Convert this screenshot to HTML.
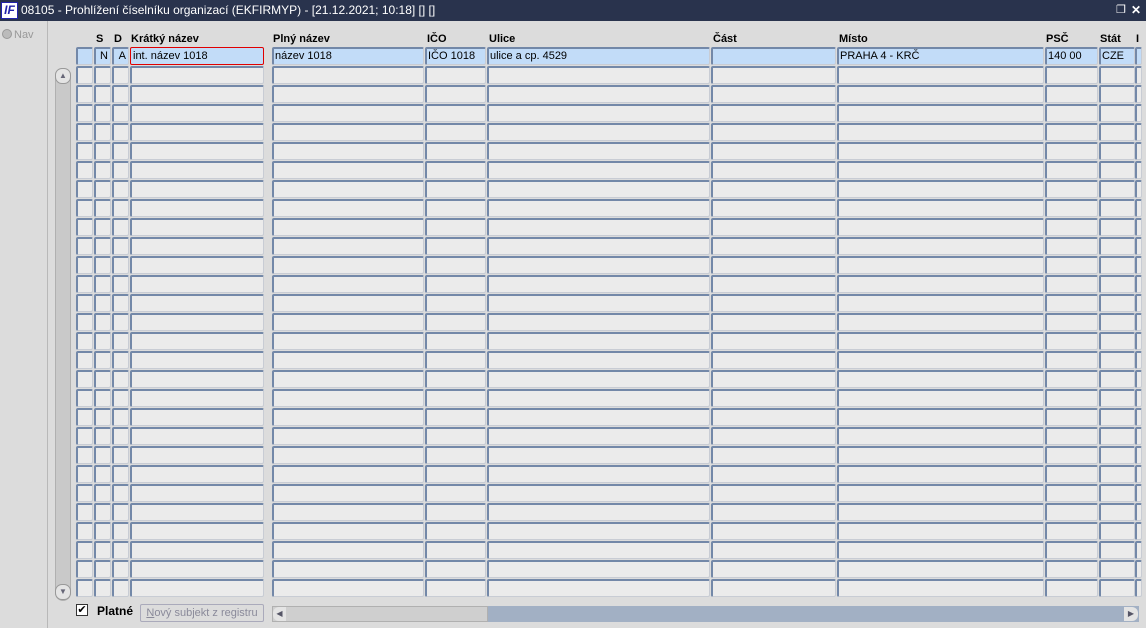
<!DOCTYPE html>
<html><head><meta charset="utf-8"><style>
*{box-sizing:border-box;margin:0;padding:0}
body{width:1146px;height:628px;background:#dcdcdc;font-family:"Liberation Sans",Arial,sans-serif;font-size:12px;position:relative;overflow:hidden}
.t{position:absolute;left:0;top:0;width:1146px;height:21px;background:#29334d;color:#fff;font-size:12px;line-height:21px}
.ic{position:absolute;left:1px;top:2px;width:17px;height:17px;background:#fff;border:1px solid #22a;color:#22a;font:italic bold 12px "Liberation Sans";line-height:15px;text-align:center}
.lp{position:absolute;left:0;top:21px;width:48px;height:607px;border-right:1px solid #b8b8b8}
.nav{position:absolute;left:2px;top:29px;color:#999;font-size:11px}
.nav b{display:inline-block;width:10px;height:10px;border-radius:50%;background:#bbb;border:1px solid #999;vertical-align:-1px;margin-right:2px}
.h{position:absolute;top:33px;font-weight:bold;font-size:11px}
.c{position:absolute;height:18px;background:#ebebeb;border:1px solid #c8ccd4;border-top:2px solid #7388a8;border-left:2px solid #7388a8;border-radius:2px;font-size:11px;line-height:14px;padding-left:1px;white-space:nowrap;overflow:hidden}
.s{background:#c2dcf8}
.vs{position:absolute;left:55px;top:68px;width:16px;height:533px;background:#c9c9c9;border:1px solid #b0b0b0;border-radius:8px}
.btn{position:absolute;left:55px;width:16px;height:16px;background:#e4e4e4;border:1px solid #999;border-radius:7px;font-size:8px;color:#667;text-align:center;line-height:14px}
.hs{position:absolute;left:272px;top:606px;width:867px;height:16px;background:#a2b0c4}
</style></head><body>
<div class="t"><span class="ic">IF</span><span style="position:absolute;left:21px">08105 - Prohlížení číselníku organizací (EKFIRMYP) - [21.12.2021; 10:18] [] []</span><span style="position:absolute;left:1116px;font-size:11px">❐</span><span style="position:absolute;left:1131px;font-weight:bold">✕</span></div>
<div class="lp"></div>
<div class="nav"><b></b>Nav</div>
<div class="h" style="left:96px">S</div><div class="h" style="left:114px">D</div>
<div class="h" style="left:131px">Krátký název</div><div class="h" style="left:273px">Plný název</div>
<div class="h" style="left:427px">IČO</div><div class="h" style="left:489px">Ulice</div>
<div class="h" style="left:713px">Část</div><div class="h" style="left:839px">Místo</div>
<div class="h" style="left:1046px">PSČ</div><div class="h" style="left:1100px">Stát</div><div class="h" style="left:1136px">I</div>
<div id="g"></div>
<div class="vs"></div>
<div class="btn" style="top:68px">▲</div>
<div class="btn" style="top:584px">▼</div>
<div style="position:absolute;left:76px;top:604px;width:12px;height:12px;border:1px solid #333;background:#fff;font-size:11px;line-height:10px;text-align:center">✔</div>
<div style="position:absolute;left:97px;top:604px;font-weight:bold">Platné</div>
<div style="position:absolute;left:140px;top:604px;width:124px;height:18px;border:1px solid #aab;border-radius:2px;color:#8a8a9a;text-align:center;line-height:16px;font-size:11px;white-space:nowrap"><u>N</u>ový subjekt z registru</div>
<div class="hs"></div>
<div style="position:absolute;left:272px;top:606px;width:216px;height:16px;background:#cfcfcf;border:1px solid #b0b0b0"></div>
<div style="position:absolute;left:273px;top:607px;width:13px;height:14px;background:#e4e4e4;border-radius:6px 0 0 6px;font-size:8px;line-height:14px;color:#556;text-align:center">◀</div>
<div style="position:absolute;left:1124px;top:607px;width:14px;height:14px;background:#e4e4e4;border-radius:0 6px 6px 0;font-size:8px;line-height:14px;color:#556;text-align:center">▶</div>
<script>
var cols=[[76,18],[94,18],[112,18],[130,135],[272,153],[425,62],[487,224],[711,126],[837,208],[1045,54],[1099,37],[1135,8]];
var vals=["","N","A","int. název 1018","název 1018","IČO 1018","ulice a cp. 4529","","PRAHA 4 - KRČ","140 00","CZE",""];
var h="";
for(var r=0;r<29;r++){var y=47+r*19;for(var i=0;i<cols.length;i++){var c=cols[i];var st="left:"+c[0]+"px;top:"+y+"px;width:"+(c[1]-1)+"px";var cl="c";var t="";
if(r==0){cl+=" s";t=vals[i];st+=";line-height:15px";if(i==1||i==2)st+=";text-align:right;padding-right:2px";if(i==3)st+=";border:1px solid #e00000;padding-left:2px;line-height:16px";}
h+='<div class="'+cl+'" style="'+st+'">'+t+'</div>';}}
document.getElementById("g").innerHTML=h;
</script>
</body></html>
